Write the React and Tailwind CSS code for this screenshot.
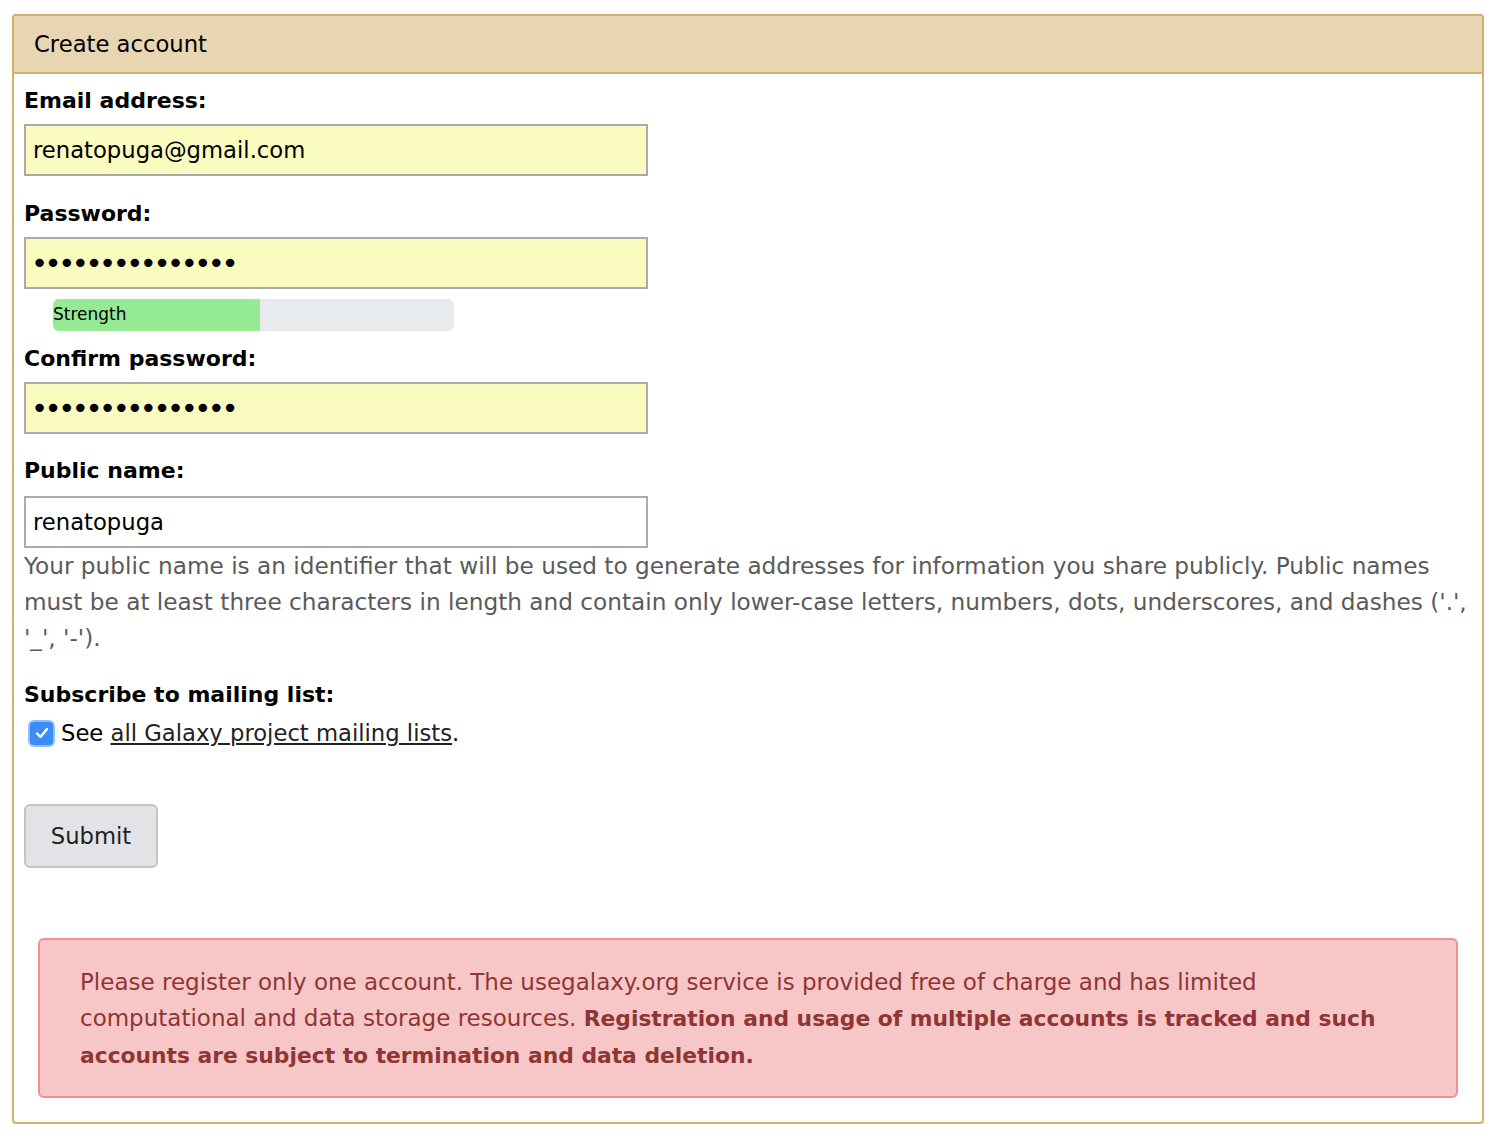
import React, { useState } from 'react';

const font = { fontFamily: '"DejaVu Sans", Verdana, sans-serif' };

const App = () => {
  const [form, setForm] = useState({
    email: 'renatopuga@gmail.com',
    password: 'passwordpasswor',
    confirm: 'passwordpasswor',
    username: 'renatopuga',
    subscribe: true,
  });

  const handleChange = (e) => {
    const { name, value, type, checked } = e.target;
    setForm({ ...form, [name]: type === 'checkbox' ? checked : value });
  };

  return (
    <div className="min-h-[1140px] bg-white pt-[14px] pl-[12px]" style={font}>
      <div className="w-[1472px] border-2 border-[#d4b068] rounded-[4px] overflow-hidden">
        <div className="h-[58px] bg-[#e8d6b3] border-b-2 border-[#d4b068] pl-[20px] flex items-center text-[22.7px] text-black">
          Create account
        </div>

        <form onSubmit={(e) => e.preventDefault()} className="px-[10px] pt-[12px] pb-[24px]">
          <label className="block font-bold text-[22px] leading-[30px] text-black">Email address:</label>
          <input
            name="email"
            value={form.email}
            onChange={handleChange}
            className="block mt-[8px] w-[624px] h-[52px] border-2 border-[#aaaaaa] bg-[#f9fbbf] px-[7px] text-[22.7px] text-black outline-none"
          />

          <label className="block mt-[23px] font-bold text-[22px] leading-[30px] text-black">Password:</label>
          <input
            type="password"
            name="password"
            value={form.password}
            onChange={handleChange}
            className="block mt-[8px] w-[624px] h-[52px] border-2 border-[#aaaaaa] bg-[#f9fbbf] px-[5px] text-[29px] text-black outline-none tracking-[-3.5px]"
          />
          <div className="ml-[29px] mt-[10px] w-[401px] h-[32px] rounded-[6px] bg-[#e8ebee] overflow-hidden flex">
            <div className="w-[207px] h-full bg-[#94eb94] flex items-center text-[17px] text-black">Strength</div>
          </div>

          <label className="block mt-[13px] font-bold text-[22px] leading-[30px] text-black">Confirm password:</label>
          <input
            type="password"
            name="confirm"
            value={form.confirm}
            onChange={handleChange}
            className="block mt-[8px] w-[624px] h-[52px] border-2 border-[#aaaaaa] bg-[#f9fbbf] px-[5px] text-[29px] text-black outline-none tracking-[-3.5px]"
          />

          <label className="block mt-[22px] font-bold text-[22px] leading-[30px] text-black">Public name:</label>
          <input
            name="username"
            value={form.username}
            onChange={handleChange}
            className="block mt-[10px] w-[624px] h-[52px] border-2 border-[#aaaaaa] bg-white px-[7px] text-[22.7px] text-black outline-none"
          />
          <p className="text-[23.2px] leading-[36px] text-[#5a5a5a] whitespace-nowrap">
            Your public name is an identifier that will be used to generate addresses for information you share publicly. Public names<br />
            must be at least three characters in length and contain only lower-case letters, numbers, dots, underscores, and dashes ('.',<br />
            '_', '-').
          </p>

          <label className="block mt-[24px] font-bold text-[22px] leading-[30px] text-black">Subscribe to mailing list:</label>
          <div className="mt-[8px] flex items-center text-[22.7px] leading-[30px] text-black">
            <span className="ml-[4px] mr-[6px] w-[27px] h-[27px] rounded-[6px] bg-[#3b8df5] border-2 border-[#8fc0fb] flex items-center justify-center">
              <svg width="14" height="12" viewBox="0 0 14 12" fill="none">
                <path d="M2 6.5 L5.5 10 L12 2" stroke="white" strokeWidth="2.4" strokeLinecap="round" strokeLinejoin="round" />
              </svg>
            </span>
            <span>
              See <a href="#" className="underline text-[#222]">all Galaxy project mailing lists</a>.
            </span>
          </div>

          <button
            type="submit"
            className="mt-[56px] w-[134px] h-[64px] rounded-[6px] border-2 border-[#c4c4c4] bg-[#e1e3e7] text-[22.7px] text-[#222]"
          >
            Submit
          </button>

          <div className="mt-[70px] mx-[14px] border-2 border-[#f09090] bg-[#f7c6c6] rounded-[6px] pl-[40px] pr-[20px] pt-[24px] pb-[22px] text-[23px] leading-[36px] text-[#8f3535] whitespace-nowrap">
            Please register only one account. The usegalaxy.org service is provided free of charge and has limited<br />
            computational and data storage resources. <b className="text-[21.8px]">Registration and usage of multiple accounts is tracked and such</b><br />
            <b className="text-[21.8px]">accounts are subject to termination and data deletion.</b>
          </div>
        </form>
      </div>
    </div>
  );
};

export default App;
